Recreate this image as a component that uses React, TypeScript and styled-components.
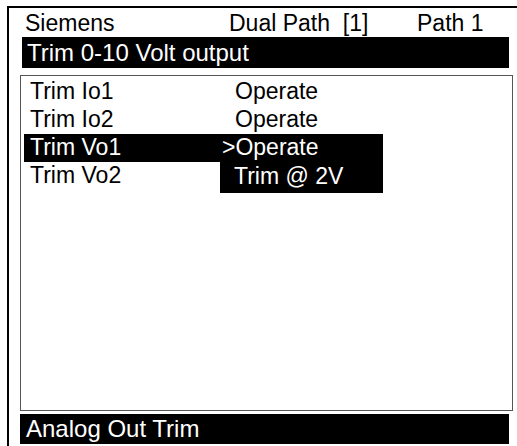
import React from 'react';
import styled, { createGlobalStyle } from 'styled-components';

const GlobalStyle = createGlobalStyle`
  html, body {
    margin: 0;
    padding: 0;
    background: #ffffff;
    overflow: hidden;
  }
  body {
    font-family: "Liberation Sans", Arial, sans-serif;
    color: #000000;
  }
`;

const Screen = styled.div`
  width: 517px;
  height: 446px;
  overflow: hidden;
  padding: 6px 0 0 7px;
  box-sizing: border-box;
`;

const Frame = styled.div`
  width: 560px;
  height: 460px;
  border-top: 2px solid #000;
  border-left: 2px solid #000;
  display: flex;
  flex-direction: column;
  font-size: 23px;
`;

const Header = styled.div`
  height: 29px;
  display: flex;
  align-items: flex-end;
  padding-left: 16px;
  line-height: 27px;
`;

const HeaderCell = styled.span<{ $width: number }>`
  width: ${(p) => p.$width}px;
  white-space: pre;
`;

const Bar = styled.div<{ $width: number }>`
  width: ${(p) => p.$width}px;
  height: 31px;
  margin-left: 13px;
  background: #000;
  color: #fff;
  font-size: 24px;
  line-height: 31px;
  padding-left: 5px;
  box-sizing: border-box;
`;

const ListBox = styled.div`
  width: 493px;
  height: 336px;
  margin: 7px 0 0 11px;
  border: 1px solid #555;
  box-sizing: border-box;
  padding: 2px 0 0 3px;
  position: relative;
`;

const Row = styled.div<{ $active?: boolean }>`
  width: 359px;
  height: 28px;
  line-height: 26px;
  display: grid;
  grid-template-columns: 196px 1fr;
  background: ${(p) => (p.$active ? '#000' : 'transparent')};
  color: ${(p) => (p.$active ? '#fff' : '#000')};
`;

const Label = styled.span`
  padding-left: 6px;
`;

const Value = styled.span<{ $cursor?: boolean }>`
  padding-left: ${(p) => (p.$cursor ? 2 : 15)}px;
  white-space: pre;
`;

const Popup = styled.div`
  position: absolute;
  left: 199px;
  top: 86px;
  width: 163px;
  height: 31px;
  background: #000;
  color: #fff;
  line-height: 28px;
  padding-left: 14px;
  box-sizing: border-box;
`;

const Footer = styled(Bar)`
  margin-left: 11px;
  margin-top: 3px;
  height: 30px;
  line-height: 30px;
  padding-left: 6px;
`;

const rows = [
  { label: 'Trim Io1', value: 'Operate' },
  { label: 'Trim Io2', value: 'Operate' },
  { label: 'Trim Vo1', value: '>Operate', active: true },
  { label: 'Trim Vo2', value: '' },
];

export default function App() {
  return (
    <Screen>
      <GlobalStyle />
      <Frame>
        <Header>
          <HeaderCell $width={204}>Siemens</HeaderCell>
          <HeaderCell $width={188}>Dual Path  [1]</HeaderCell>
          <HeaderCell $width={80}>Path 1</HeaderCell>
        </Header>
        <Bar $width={487}>Trim 0-10 Volt output</Bar>
        <ListBox>
          {rows.map((r) => (
            <Row key={r.label} $active={r.active}>
              <Label>{r.label}</Label>
              <Value $cursor={r.active}>{r.value}</Value>
            </Row>
          ))}
          <Popup>Trim @ 2V</Popup>
        </ListBox>
        <Footer $width={489}>Analog Out Trim</Footer>
      </Frame>
    </Screen>
  );
}
